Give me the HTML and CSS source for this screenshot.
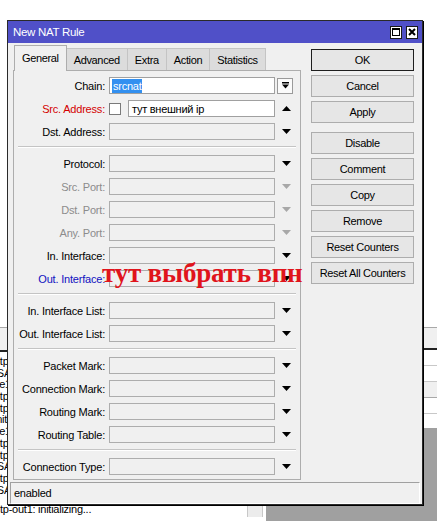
FILE: index.html
```html
<!DOCTYPE html>
<html>
<head>
<meta charset="utf-8">
<link rel="stylesheet" href="styles.css">
</head>
<body>
<div class="desktop">
  <div class="listwin">
    <div class="lw-space"></div>
    <div class="lw-head"></div>
    <div class="lw-row"></div>
    <div class="lw-row"></div>
    <div class="lw-row gray"></div>
    <div class="lw-row"></div>
  </div>
  <div class="logwin">
    <div class="log-head"></div>
    <div class="log-rows">
      <div class="log-line">ptp-out1: terminating...</div>
      <div class="log-line">ISAKMP</div>
      <div class="log-line">ke1 started</div>
      <div class="log-line">ptp-out1: connecting</div>
      <div class="log-line">ptp-out1: disconnected</div>
      <div class="log-line">initializing...</div>
      <div class="log-line">ke1 started</div>
      <div class="log-line">ptp-out1: connecting</div>
      <div class="log-line">ptp-out1: terminating</div>
      <div class="log-line">ISAKMP</div>
      <div class="log-line">ptp-out1: connecting</div>
      <div class="log-line">ISAKMP</div>
    </div>
    <div class="log-last">
      <span class="log-text">tp-out1: initializing...</span>
      <span class="log-scroll"></span>
    </div>
  </div>

  <div class="window">
    <div class="titlebar">
      <span class="title">New NAT Rule</span>
      <span class="tbtns">
        <span class="tbtn"><svg width="8" height="8" viewBox="0 0 8 8"><rect x="0.5" y="0.5" width="7" height="7" fill="none" stroke="#000" stroke-width="1"/><rect x="0" y="0" width="8" height="2" fill="#000"/></svg></span>
        <span class="tbtn"><svg width="8" height="8" viewBox="0 0 8 8"><path d="M1 1L7 7M7 1L1 7" stroke="#000" stroke-width="2"/></svg></span>
      </span>
    </div>
    <div class="wbody">
      <div class="maincol">
        <div class="tabs">
          <span class="tab active">General</span>
          <span class="tab">Advanced</span>
          <span class="tab">Extra</span>
          <span class="tab">Action</span>
          <span class="tab">Statistics</span>
        </div>
        <div class="panel">
          <div class="row">
            <span class="lbl">Chain:</span>
            <span class="field white"><span class="sel">srcnat</span></span>
            <span class="arr chainbtn"><svg width="7" height="7" viewBox="0 0 7 7"><rect x="0" y="0" width="7" height="1.5" fill="#000"/><path d="M0 2.5H7L3.5 6.5Z" fill="#000"/></svg></span>
          </div>
          <div class="row">
            <span class="lbl red">Src. Address:</span>
            <span class="chk"></span>
            <span class="field white narrow">тут внешний ip</span>
            <span class="arr"><svg width="9" height="5" viewBox="0 0 9 5"><path d="M0 5H9L4.5 0Z" fill="#000"/></svg></span>
          </div>
          <div class="row">
            <span class="lbl">Dst. Address:</span>
            <span class="field"></span>
            <span class="arr"><svg width="9" height="5" viewBox="0 0 9 5"><path d="M0 0H9L4.5 5Z" fill="#000"/></svg></span>
          </div>
          <div class="sep"></div>
          <div class="row">
            <span class="lbl">Protocol:</span>
            <span class="field"></span>
            <span class="arr"><svg width="9" height="5" viewBox="0 0 9 5"><path d="M0 0H9L4.5 5Z" fill="#000"/></svg></span>
          </div>
          <div class="row">
            <span class="lbl dis">Src. Port:</span>
            <span class="field"></span>
            <span class="arr"><svg width="9" height="5" viewBox="0 0 9 5"><path d="M0 0H9L4.5 5Z" fill="#a8a8a8"/></svg></span>
          </div>
          <div class="row">
            <span class="lbl dis">Dst. Port:</span>
            <span class="field"></span>
            <span class="arr"><svg width="9" height="5" viewBox="0 0 9 5"><path d="M0 0H9L4.5 5Z" fill="#a8a8a8"/></svg></span>
          </div>
          <div class="row">
            <span class="lbl dis">Any. Port:</span>
            <span class="field"></span>
            <span class="arr"><svg width="9" height="5" viewBox="0 0 9 5"><path d="M0 0H9L4.5 5Z" fill="#a8a8a8"/></svg></span>
          </div>
          <div class="row">
            <span class="lbl">In. Interface:</span>
            <span class="field"></span>
            <span class="arr"><svg width="9" height="5" viewBox="0 0 9 5"><path d="M0 0H9L4.5 5Z" fill="#000"/></svg></span>
          </div>
          <div class="row note-row">
            <span class="lbl blue">Out. Interface:</span>
            <span class="field"></span>
            <span class="arr"><svg width="9" height="5" viewBox="0 0 9 5"><path d="M0 0H9L4.5 5Z" fill="#000"/></svg></span>
            <span class="note">тут выбрать впн</span>
          </div>
          <div class="sep"></div>
          <div class="row">
            <span class="lbl">In. Interface List:</span>
            <span class="field"></span>
            <span class="arr"><svg width="9" height="5" viewBox="0 0 9 5"><path d="M0 0H9L4.5 5Z" fill="#000"/></svg></span>
          </div>
          <div class="row">
            <span class="lbl">Out. Interface List:</span>
            <span class="field"></span>
            <span class="arr"><svg width="9" height="5" viewBox="0 0 9 5"><path d="M0 0H9L4.5 5Z" fill="#000"/></svg></span>
          </div>
          <div class="sep"></div>
          <div class="row">
            <span class="lbl">Packet Mark:</span>
            <span class="field"></span>
            <span class="arr"><svg width="9" height="5" viewBox="0 0 9 5"><path d="M0 0H9L4.5 5Z" fill="#000"/></svg></span>
          </div>
          <div class="row">
            <span class="lbl">Connection Mark:</span>
            <span class="field"></span>
            <span class="arr"><svg width="9" height="5" viewBox="0 0 9 5"><path d="M0 0H9L4.5 5Z" fill="#000"/></svg></span>
          </div>
          <div class="row">
            <span class="lbl">Routing Mark:</span>
            <span class="field"></span>
            <span class="arr"><svg width="9" height="5" viewBox="0 0 9 5"><path d="M0 0H9L4.5 5Z" fill="#000"/></svg></span>
          </div>
          <div class="row">
            <span class="lbl">Routing Table:</span>
            <span class="field"></span>
            <span class="arr"><svg width="9" height="5" viewBox="0 0 9 5"><path d="M0 0H9L4.5 5Z" fill="#000"/></svg></span>
          </div>
          <div class="sep"></div>
          <div class="row">
            <span class="lbl">Connection Type:</span>
            <span class="field"></span>
            <span class="arr"><svg width="9" height="5" viewBox="0 0 9 5"><path d="M0 0H9L4.5 5Z" fill="#000"/></svg></span>
          </div>
        </div>
      </div>
      <div class="btncol">
        <div class="btn default">OK</div>
        <div class="btn">Cancel</div>
        <div class="btn gapafter">Apply</div>
        <div class="btn">Disable</div>
        <div class="btn">Comment</div>
        <div class="btn">Copy</div>
        <div class="btn">Remove</div>
        <div class="btn">Reset Counters</div>
        <div class="btn">Reset All Counters</div>
      </div>
    </div>
    <div class="status">enabled</div>
  </div>
</div>
</body>
</html>
```

FILE: styles.css
```css
* { box-sizing: border-box; }
html, body { margin: 0; padding: 0; }
body {
  width: 437px;
  height: 521px;
  overflow: hidden;
  font-family: "Liberation Sans", Arial, sans-serif;
  font-size: 11px;
  letter-spacing: -0.25px;
  color: #000;
}
.desktop {
  position: relative;
  width: 437px;
  height: 521px;
  background: #a0a0a0;
  overflow: hidden;
}

/* background windows */
.listwin {
  position: absolute;
  left: 0;
  top: 0;
  width: 437px;
  height: 428px;
  background: #fff;
}
.lw-space { height: 327px; }
.lw-head {
  height: 23px;
  border-top: 1px solid #a8a8a8;
  border-bottom: 2px solid #222;
  background: #f0f0f0;
}
.lw-row { height: 16px; border-bottom: 1px solid #c8c8c8; }
.lw-row.gray { background: #f0f0f0; border-bottom-color: #a8a8a8; }

.logwin {
  position: absolute;
  left: 0;
  top: 327px;
  width: 266px;
  height: 194px;
  background: #fff;
  display: flex;
  flex-direction: column;
}
.log-head {
  height: 25px;
  border-top: 1px solid #a8a8a8;
  border-bottom: 2px solid #222;
  background: #f0f0f0;
  flex: none;
}
.log-rows { padding-top: 4px; flex: none; }
.log-line {
  height: 11.7px;
  line-height: 11.7px;
  white-space: nowrap;
  text-indent: -6px;
  font-size: 11px;
}
.log-last {
  margin-top: 6px;
  display: flex;
  align-items: center;
  height: 14px;
}
.log-text { width: 247px; white-space: nowrap; padding-left: 0; }
.log-scroll {
  width: 16px;
  height: 16px;
  background: #ececec;
  border-left: 1px solid #c8c8c8;
  border-right: 1px solid #c8c8c8;
}

/* main dialog */
.window {
  position: absolute;
  left: 7px;
  top: 20px;
  width: 416px;
  height: 485px;
  background: #f0f0f0;
  border: 1px solid #2a2a2a;
  box-shadow: 1px 1px 0 #000;
  display: flex;
  flex-direction: column;
}
.titlebar {
  height: 22px;
  background: #5050c8;
  display: flex;
  align-items: center;
  justify-content: space-between;
  padding: 0 4px 0 5px;
  flex: none;
}
.title {
  color: #fff;
  font-size: 11.5px;
  letter-spacing: -0.3px;
}
.tbtns { display: flex; gap: 4px; }
.tbtn {
  width: 12px;
  height: 13px;
  background: #fff;
  border: 1px solid #1a1a1a;
  display: flex;
  align-items: center;
  justify-content: center;
}
.tbtn svg { display: block; }

.wbody {
  display: flex;
  padding: 2px 8px 0 5px;
  gap: 10px;
  flex: none;
}
.maincol { width: 288px; display: flex; flex-direction: column; }
.tabs {
  display: flex;
  align-items: flex-end;
  height: 25px;
  padding-left: 1px;
  position: relative;
  z-index: 1;
}
.tab {
  height: 22px;
  padding: 0 7px;
  display: flex;
  align-items: center;
  background: #dcdcdc;
  border: 1px solid #c4c4c4;
  border-bottom: none;
  margin-left: -1px;
  font-size: 11px;
  letter-spacing: -0.35px;
}
.tab:first-child { margin-left: 0; }
.tab.active {
  height: 26px;
  margin-bottom: -1px;
  background: #f0f0f0;
  border-color: #adadad;
  padding-bottom: 2px;
  position: relative;
  z-index: 2;
}
.panel {
  height: 410px;
  border: 1px solid #adadad;
  background: #f0f0f0;
  padding-top: 6px;
}
.row {
  display: flex;
  align-items: center;
  height: 17px;
  margin-bottom: 6px;
  position: relative;
}
.lbl {
  width: 91px;
  text-align: right;
  padding-right: 0;
  margin-right: 4px;
  white-space: nowrap;
  flex: none;
  letter-spacing: -0.2px;
}
.lbl.red { color: #d40000; }
.lbl.blue { color: #1010c0; }
.lbl.dis { color: #8c8c8c; }
.field {
  width: 166px;
  height: 17px;
  border: 1px solid #adadad;
  background: #f0f0f0;
  flex: none;
  display: flex;
  align-items: center;
  padding-left: 2px;
  white-space: nowrap;
}
.field.white { background: #fff; border-color: #a0a0a0; }
.field.narrow { width: 147px; padding-left: 3px; }
.sel {
  background: #3390f0;
  color: #fff;
  padding: 0 1px;
  line-height: 14px;
}
.chk {
  width: 12px;
  height: 12px;
  background: #fff;
  border: 1px solid #7a7a7a;
  margin-right: 7px;
  flex: none;
}
.arr {
  width: 22px;
  display: flex;
  justify-content: center;
  align-items: center;
  flex: none;
}
.arr svg { display: block; }
.chainbtn {
  width: 16px;
  height: 16px;
  margin-left: 2px;
  border: 1px solid #9a9a9a;
  background: #fafafa;
}
.sep {
  height: 1px;
  background: #c4c4c4;
  border-bottom: 1px solid #fff;
  box-sizing: content-box;
  margin: 0 4px 7px 4px;
}
.note {
  position: absolute;
  left: 88px;
  top: -12px;
  font-family: "Liberation Serif", "Times New Roman", serif;
  font-weight: bold;
  font-size: 27px;
  letter-spacing: -0.2px;
  color: #e0141c;
  white-space: nowrap;
  line-height: 30px;
}

.btncol {
  width: 103px;
  padding-top: 4px;
  display: flex;
  flex-direction: column;
}
.btn {
  height: 22px;
  margin-bottom: 4px;
  border: 1px solid #adadad;
  background: #e6e6e6;
  display: flex;
  align-items: center;
  justify-content: center;
  white-space: nowrap;
  letter-spacing: -0.3px;
}
.btn.default { border-color: #1e1e1e; }
.btn.gapafter { margin-bottom: 9px; }

.status {
  margin: 2px 2px 0 2px;
  height: 22px;
  border-top: 1px solid #a0a0a0;
  border-left: 1px solid #a0a0a0;
  border-right: 1px solid #fff;
  border-bottom: 1px solid #fff;
  display: flex;
  align-items: center;
  padding-left: 3px;
  font-size: 11px;
}
```
